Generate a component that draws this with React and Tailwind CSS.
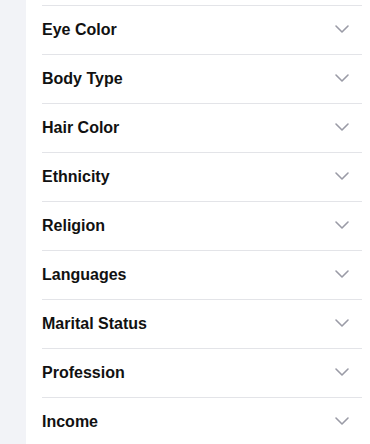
import React from "react";
import { ChevronDown } from "lucide-react";

const items = [
  "Eye Color",
  "Body Type",
  "Hair Color",
  "Ethnicity",
  "Religion",
  "Languages",
  "Marital Status",
  "Profession",
  "Income",
];

export default function App() {
  return (
    <div
      className="flex w-[370px] h-[444px] overflow-hidden bg-[#f2f3f7]"
      style={{ fontFamily: '"Liberation Sans", Arial, sans-serif' }}
    >
      <div className="w-[26px] shrink-0" />
      <div className="flex-1 bg-white pl-4 pr-2">
        <div className="h-[6px] border-b border-[#e3e4e8]" />
        {items.map((t) => (
          <div
            key={t}
            className="flex items-center justify-between h-[49px] border-b border-[#e3e4e8] pr-2"
          >
            <span className="text-[16px] font-bold text-[#111111]">{t}</span>
            <ChevronDown size={24} strokeWidth={1.6} className="text-[#9a9ba6] -mt-[2px]" />
          </div>
        ))}
      </div>
    </div>
  );
}
